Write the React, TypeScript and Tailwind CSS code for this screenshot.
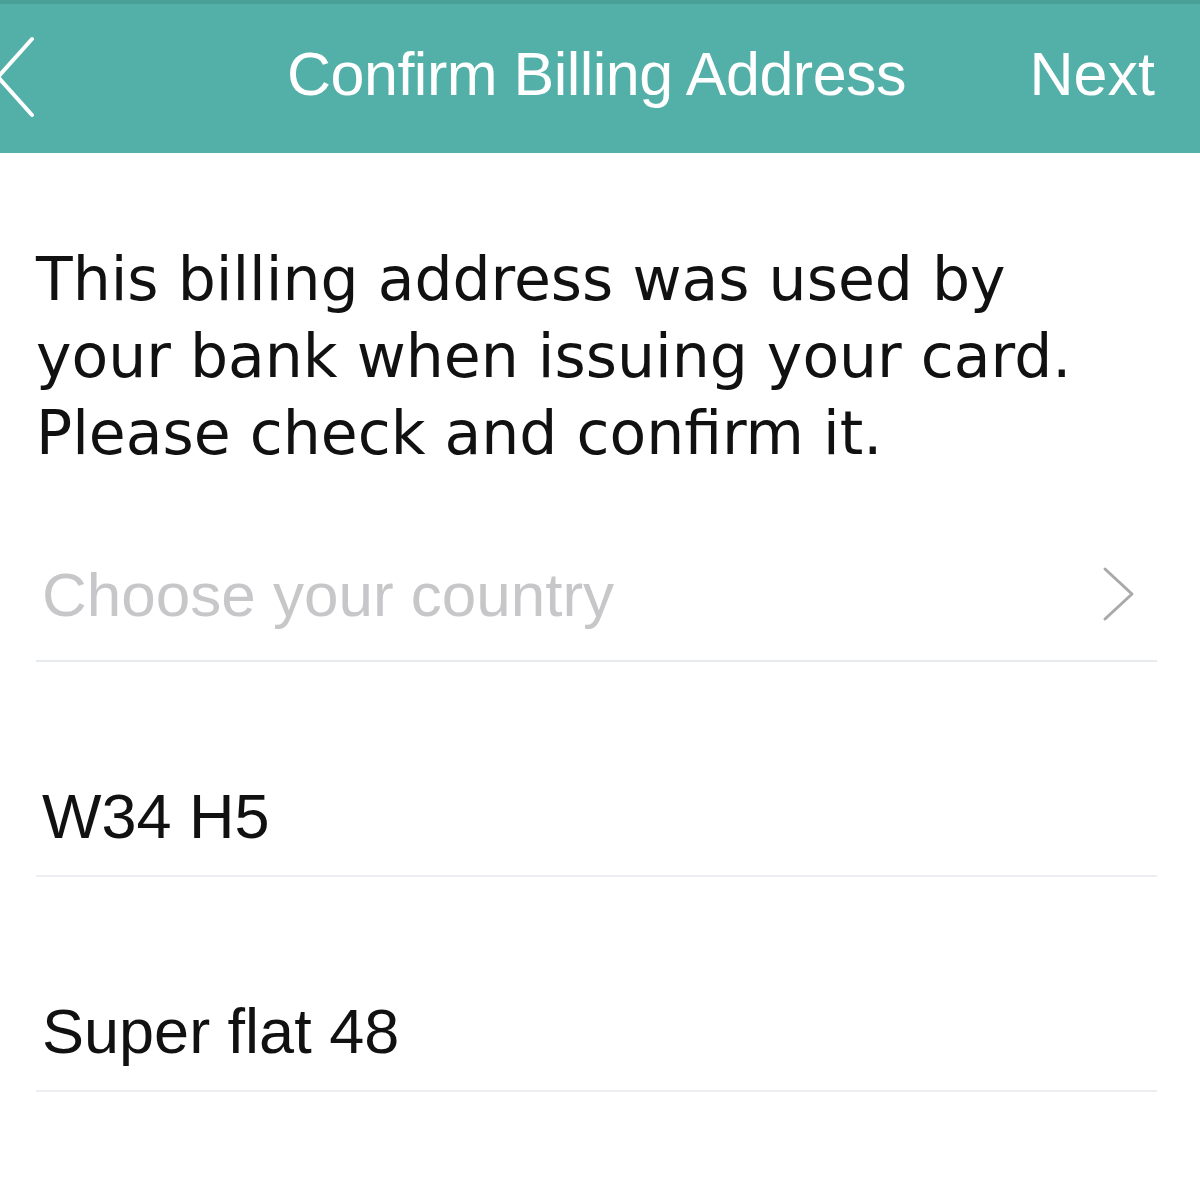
const rows = ["W34 H5", "Super flat 48"];

export default function App() {
  return (
    <div className="h-[1200px] w-[1200px] overflow-hidden bg-white font-['Liberation_Sans',Arial,sans-serif]">
      <header className="relative flex h-[153px] items-center border-t-4 border-[#4a9f98] bg-[#52b0a8] pb-[8px] text-white">
        <svg
          width="40"
          height="84"
          viewBox="0 0 40 84"
          className="absolute left-[-4px] top-[31px]"
          fill="none"
          stroke="white"
          strokeWidth="4"
          strokeLinecap="round"
          strokeLinejoin="round"
        >
          <polyline points="36,4 2,42 36,80" />
        </svg>
        <h1 className="ml-[287px] text-[61px] leading-none tracking-[-0.5px]">
          Confirm Billing Address
        </h1>
        <button className="ml-auto mr-[45px] text-[61px] leading-none">Next</button>
      </header>

      <main className="pl-[36px] pr-[43px]">
        <p className="mt-[88px] font-['DejaVu_Sans',Verdana,sans-serif] text-[60px] leading-[77px] text-[#111]">
          This billing address was used by
          <br />
          your bank when issuing your card.
          <br />
          Please check and confirm it.
        </p>

        <div className="mt-[92px] flex h-[98px] items-start justify-between border-b-2 border-[#e8ebee] pl-[6px]">
          <span className="text-[62px] leading-none text-[#c7c7c9]">Choose your country</span>
          <svg
            width="36"
            height="58"
            viewBox="0 0 36 58"
            className="mr-[20px] mt-[1px]"
            fill="none"
            stroke="#a9a9ab"
            strokeWidth="3"
            strokeLinecap="round"
            strokeLinejoin="round"
          >
            <polyline points="4,4 31,29 4,54" />
          </svg>
        </div>

        {rows.map((r) => (
          <div
            key={r}
            className="flex h-[215px] items-end border-b-2 border-[#eceef1] pb-[27px] pl-[6px]"
          >
            <span className="text-[63px] leading-none text-[#111]">{r}</span>
          </div>
        ))}
      </main>
    </div>
  );
}
